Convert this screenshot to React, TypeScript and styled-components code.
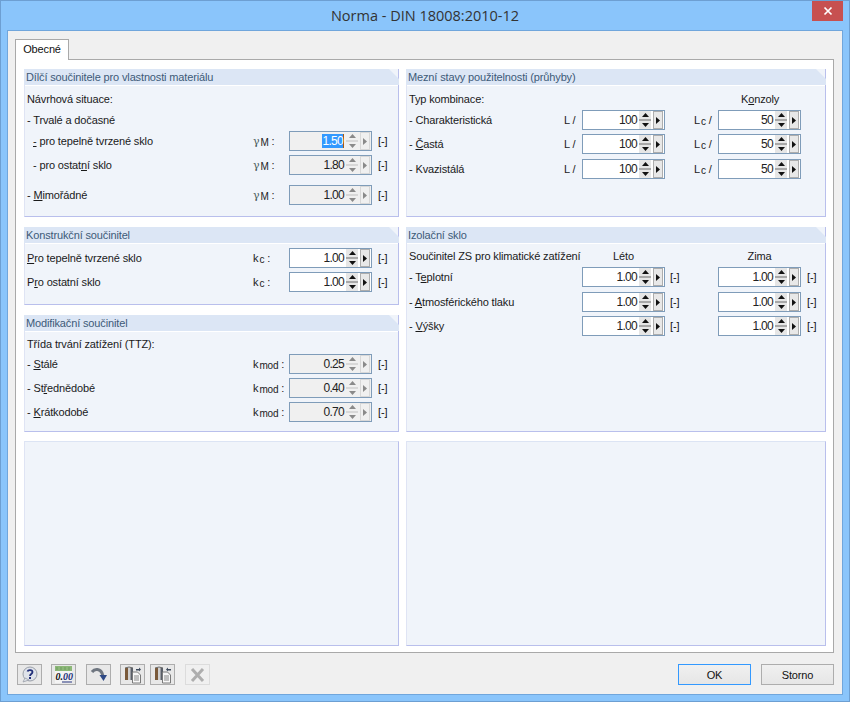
import React from "react";
import styled, { createGlobalStyle } from "styled-components";

const Global = createGlobalStyle`
  html, body { margin: 0; padding: 0; width: 850px; height: 702px; overflow: hidden; }
  body { font-family: "Liberation Sans", Arial, sans-serif; font-size: 11px; letter-spacing: -0.14px; color: #1a1a1a; }
  * { box-sizing: border-box; }
  u { text-underline-offset: 1px; text-decoration-thickness: 1px; }
`;

const Win = styled.div`
  width: 850px; height: 702px; background: #8ac5fb; border: 1px solid #6d9fd2;
  display: flex; flex-direction: column; position: relative;
`;
const TitleBar = styled.div`
  height: 29px; flex: none; display: flex; align-items: center; justify-content: center; letter-spacing: 0;
  font-family: "Open Sans", sans-serif; font-size: 14.5px; color: #333; padding-bottom: 1px;
`;
const Close = styled.div`
  position: absolute; top: 0; right: 6px; width: 31px; height: 20px; background: #c75050;
  display: flex; align-items: center; justify-content: center;
`;
const Client = styled.div`
  flex: 1; margin: 0 6px 6px 6px; background: #f0f0f0; border: 1px solid #70a6dc;
  padding: 8px 8px 0 7px; display: flex; flex-direction: column;
`;
const TabRow = styled.div`display: flex; height: 20px; flex: none;`;
const Tab = styled.div`
  width: 54px; height: 21px; background: #fff; border: 1px solid #a9a9a9; border-bottom: 0;
  position: relative; z-index: 1; text-align: center; line-height: 19px; color: #111;
`;
const TabPage = styled.div`
  height: 594px; flex: none; background: #fff; border: 1px solid #a9a9a9; padding: 9px 6px 0 8px;
  display: grid; grid-template-columns: 375px 420px; column-gap: 7px; align-content: start;
`;
const Column = styled.div`display: flex; flex-direction: column;`;
const Panel = styled.div<{ $h: number; $mb?: number }>`
  height: ${p => p.$h}px; margin-bottom: ${p => p.$mb ?? 0}px; background: #f0f4fa; flex: none;
  border: 1px solid #b9bfec; border-width: 0 1px 1px 1px; border-left-color: #dfe4f4;
  position: relative; display: flex; flex-direction: column;
`;
const Empty = styled.div`
  height: 205px; background: #f0f4fa; border: 1px solid #b9bfec; border-top-color: #dce4f4; border-left-color: #dfe4f4;
`;
const Head = styled.div`
  height: 16px; margin: 0 -1px; background: #dce6f5; color: #3c5a78; padding-left: 2px; line-height: 16px; flex: none;
  clip-path: polygon(0 0, calc(100% - 10px) 0, 100% 10px, 100% 100%, 0 100%);
  border-bottom: 0; white-space: nowrap;
`;
const Body = styled.div<{ $pt: number }>`
  padding: ${p => p.$pt}px 0 0 2px; border-top: 1px solid #fff; flex: 1;
`;
const LeftRow = styled.div<{ $mt?: number }>`
  display: grid; grid-template-columns: 226px 36px 83px auto; height: 20px; align-items: center;
  margin-top: ${p => p.$mt ?? 0}px; white-space: nowrap;
`;
const ServRow = styled.div<{ $mt?: number }>`
  display: grid; grid-template-columns: 155px 18px 83px 29px 24px 83px; height: 20px; align-items: center;
  margin-top: ${p => p.$mt ?? 0}px; white-space: nowrap;
`;
const InsRow = styled.div<{ $mt?: number }>`
  display: grid; grid-template-columns: 173px 83px 53px 83px auto; height: 20px; align-items: center;
  margin-top: ${p => p.$mt ?? 0}px; white-space: nowrap;
`;
const Label = styled.div<{ $indent?: number; $span?: number }>`
  padding-left: ${p => p.$indent ?? 0}px;
  ${p => p.$span ? `grid-column: span ${p.$span};` : ""}
`;
const Centered = styled.div`text-align: center;`;
const Konzoly = styled.div`grid-column: 6; padding-left: 23px;`;
const Sym = styled.div`color: #222; white-space: nowrap;`;
const Greek = styled.span`font-family: "DejaVu Serif", serif; font-size: 11px; color: #4a5a5a;`;
const Sub = styled.span`font-size: 10px; position: relative; top: 1px; margin-left: 1px;`;
const Unit = styled.div<{ $pl?: number }>`padding-left: ${p => p.$pl ?? 6}px; color: #111;`;

const SpinBox = styled.div<{ $off?: boolean }>`
  width: 83px; height: 20px; border: 1px solid #7f9cb9; background: ${p => p.$off ? "#f0f0f0" : "#fff"};
  display: flex; align-items: stretch; padding: 0 1px 0 0; color: #222;
`;
const Value = styled.div`flex: 1; text-align: right; padding-right: 2px; line-height: 18px; font-size: 12px; letter-spacing: -0.7px;`;
const Sel = styled.span`
  background: #3399ff; color: #fff; display: inline-block; height: 14px; line-height: 14px; border-right: 1px solid #a85a10; margin-top: 2px; vertical-align: top;
`;
const Arrows = styled.div`width: 12px; display: flex; flex-direction: column; margin-right: 2px;`;
const ArrowBtn = styled.div<{ $off?: boolean; $bottom?: boolean }>`
  flex: 1; display: flex; align-items: center; justify-content: center; background: ${p => p.$off ? "#f0f0f0" : "#e6e6e6"};
  border-bottom: ${p => p.$bottom ? "0" : `2px solid ${p.$off ? "#d8d8d8" : "#a8a8a8"}`};
`;
const NextBtn = styled.div<{ $off?: boolean }>`
  width: 10px; margin: 0; display: flex; align-items: center; justify-content: center;
  background: ${p => p.$off ? "#f0f0f0" : "#e8e8e8"}; border: 1px solid ${p => p.$off ? "#d8d8d8" : "#adadad"};
`;
const Tri = styled.svg`display: block;`;

const Spinner = ({ v, off, sel }: { v: string; off?: boolean; sel?: boolean }) => {
  const c = off ? "#8a8a8a" : "#111";
  return (
    <SpinBox $off={off}>
      <Value>{sel ? <Sel>{v}</Sel> : v}</Value>
      <Arrows>
        <ArrowBtn $off={off}><Tri width="7" height="4"><path d="M3.5 0L7 4H0z" fill={c} /></Tri></ArrowBtn>
        <ArrowBtn $off={off} $bottom><Tri width="7" height="4"><path d="M0 0H7L3.5 4z" fill={c} /></Tri></ArrowBtn>
      </Arrows>
      <NextBtn $off={off}><Tri width="4" height="7"><path d="M0 0L4 3.5L0 7z" fill={c} /></Tri></NextBtn>
    </SpinBox>
  );
};

const GammaM = () => <Sym><Greek>γ</Greek><Sub>M</Sub> :</Sym>;
const Kc = () => <Sym>k<Sub>c</Sub> :</Sym>;
const Kmod = () => <Sym>k<Sub>mod</Sub> :</Sym>;
const L = () => <Sym>L /</Sym>;
const Lc = () => <Sym>L<Sub>c</Sub> /</Sym>;

const Footer = styled.div`flex: 1; display: flex; align-items: flex-start; padding: 11px 0 0 2px;`;
const Tool = styled.div<{ $ml: number; $off?: boolean }>`
  width: 25px; height: 21px; margin-left: ${p => p.$ml}px; border: 1px solid ${p => p.$off ? "#dcdcdc" : "#adadad"};
  background: ${p => p.$off ? "#f0f0f0" : "#e8e8e8"}; display: flex; align-items: center; justify-content: center;
`;
const Spacer = styled.div`flex: 1;`;
const Btn = styled.div<{ $primary?: boolean; $ml?: number }>`
  width: 73px; height: 21px; margin-left: ${p => p.$ml ?? 0}px; text-align: center; line-height: 20px; color: #111;
  background: linear-gradient(#f0f0f0, #e6e6e6); border: 1px solid ${p => p.$primary ? "#3399ff" : "#adadad"};
`;
const Num = styled.text`font-family: "Liberation Serif", serif; font-size: 10px; font-style: italic; font-weight: bold; letter-spacing: 0;`;

const Help = () => (
  <svg width="19" height="17" viewBox="0 0 19 17">
    <ellipse cx="10" cy="8" rx="7" ry="7" fill="#dfe3ea" stroke="#9a9fa8" />
    <path d="M5 12L3 16L9 14z" fill="#dfe3ea" stroke="#9a9fa8" strokeWidth=".8" />
    <path d="M7.500 5.500C8 3.500 12.500 3.500 12.500 6C12.500 8 10 8 10 10" fill="none" stroke="#23307a" strokeWidth="1.8" />
    <rect x="9" y="11" width="2" height="2" fill="#23307a" />
  </svg>
);
const Calc = () => (
  <svg width="23" height="18" viewBox="0 0 23 18">
    <rect x="3" y="0" width="17" height="5" fill="#8cb878" />
    <path d="M5 1v3M9 1v3M13 1v3M17 1v3" stroke="#6f9a60" />
    <rect x="3" y="5" width="17" height="12" fill="#f4f4f4" />
    <Num x="3.500" y="14" fill="#111">0.</Num>
    <Num x="11" y="14" fill="#23307a">00</Num>
    <path d="M10 16H20" stroke="#23307a" />
  </svg>
);
const Curve = () => (
  <svg width="20" height="17" viewBox="0 0 20 17">
    <path d="M3 6C6 2 11 3 13 7L14 10" fill="none" stroke="#6f7680" strokeWidth="3" />
    <path d="M10.500 9H18L14.500 15z" fill="#2f4a86" />
  </svg>
);
const Doc = ({ back }: { back?: boolean }) => (
  <svg width="21" height="18" viewBox="0 0 21 18">
    <rect x="3" y="2" width="3" height="12" fill="#7a5a3a" />
    <rect x="6" y="2" width="2.500" height="12" fill="#d0d0d0" />
    <rect x="8.500" y="2" width="2.500" height="12" fill="#5a5f68" />
    <path d="M3 2Q7 0 11 2" fill="none" stroke="#666" />
    <path d="M10.500 6H15.500L18.500 9V17H10.500z" fill="#f7f7f7" stroke="#7a7a7a" />
    <path d="M12 10H17M12 12H17M12 14H17" stroke="#888" />
    <path d={back ? "M14 3.500L16 1.500V3H19V4.500H16V5.500z" : "M19 3.500L17 1.500V3H14V4.500H17V5.500z"} fill="#3d4a5c" />
  </svg>
);
const Cross = () => (
  <svg width="17" height="16" viewBox="0 0 17 16">
    <path d="M3 2L14 14M14 2L3 14" stroke="#aeaeae" strokeWidth="3" />
  </svg>
);

export default function App() {
  return (
    <Win>
      <Global />
      <TitleBar>Norma - DIN 18008:2010-12</TitleBar>
      <Close>
        <svg width="10" height="10" viewBox="0 0 10 10"><path d="M1.500 1.500L8.500 8.500M8.500 1.500L1.500 8.500" stroke="#fff" strokeWidth="1.700" /></svg>
      </Close>
      <Client>
        <TabRow><Tab>Obecné</Tab></TabRow>
        <TabPage>
          <Column>
            <Panel $h={148} $mb={10}>
              <Head>Dílčí součinitele pro vlastnosti materiálu</Head>
              <Body $pt={3}>
                <LeftRow><Label>Návrhová situace:</Label></LeftRow>
                <LeftRow $mt={1}><Label>- Trvalé a dočasné</Label></LeftRow>
                <LeftRow $mt={1}><Label $indent={6}><u>-</u> pro tepelně tvrzené sklo</Label><GammaM /><Spinner v="1.50" off sel /><Unit>[-]</Unit></LeftRow>
                <LeftRow $mt={4}><Label $indent={6}>- pro ostat<u>n</u>í sklo</Label><GammaM /><Spinner v="1.80" off /><Unit>[-]</Unit></LeftRow>
                <LeftRow $mt={10}><Label>- <u>M</u>imořádné</Label><GammaM /><Spinner v="1.00" off /><Unit>[-]</Unit></LeftRow>
              </Body>
            </Panel>
            <Panel $h={78} $mb={10}>
              <Head>Konstrukční součinitel</Head>
              <Body $pt={4}>
                <LeftRow><Label><u>P</u>ro tepelně tvrzené sklo</Label><Kc /><Spinner v="1.00" /><Unit>[-]</Unit></LeftRow>
                <LeftRow $mt={4}><Label>P<u>r</u>o ostatní sklo</Label><Kc /><Spinner v="1.00" /><Unit>[-]</Unit></LeftRow>
              </Body>
            </Panel>
            <Panel $h={117} $mb={9}>
              <Head>Modifikační součinitel</Head>
              <Body $pt={2}>
                <LeftRow><Label>Třída trvání zatížení (TTZ):</Label></LeftRow>
                <LeftRow><Label>- <u>S</u>tálé</Label><Kmod /><Spinner v="0.25" off /><Unit>[-]</Unit></LeftRow>
                <LeftRow $mt={4}><Label>- St<u>ř</u>ednědobé</Label><Kmod /><Spinner v="0.40" off /><Unit>[-]</Unit></LeftRow>
                <LeftRow $mt={4}><Label>- <u>K</u>rátkodobé</Label><Kmod /><Spinner v="0.70" off /><Unit>[-]</Unit></LeftRow>
              </Body>
            </Panel>
            <Empty />
          </Column>
          <Column>
            <Panel $h={148} $mb={10}>
              <Head>Mezní stavy použitelnosti (průhyby)</Head>
              <Body $pt={3}>
                <ServRow><Label $span={5}>Typ kombinace:</Label><Konzoly>K<u>o</u>nzoly</Konzoly></ServRow>
                <ServRow $mt={1}><Label>- Charakteristická</Label><L /><Spinner v="100" /><span /><Lc /><Spinner v="50" /></ServRow>
                <ServRow $mt={4}><Label>- <u>Č</u>astá</Label><L /><Spinner v="100" /><span /><Lc /><Spinner v="50" /></ServRow>
                <ServRow $mt={5}><Label>- Kvazistálá</Label><L /><Spinner v="100" /><span /><Lc /><Spinner v="50" /></ServRow>
              </Body>
            </Panel>
            <Panel $h={205} $mb={9}>
              <Head>Izolační sklo</Head>
              <Body $pt={2}>
                <InsRow><Label>Součinitel ZS pro klimatické zatížení</Label><Centered>Léto</Centered><span /><Centered>Zima</Centered></InsRow>
                <InsRow $mt={1}><Label>- T<u>e</u>plotní</Label><Spinner v="1.00" /><Unit $pl={5}>[-]</Unit><Spinner v="1.00" /><Unit>[-]</Unit></InsRow>
                <InsRow $mt={5}><Label>- <u>A</u>tmosférického tlaku</Label><Spinner v="1.00" /><Unit $pl={5}>[-]</Unit><Spinner v="1.00" /><Unit>[-]</Unit></InsRow>
                <InsRow $mt={4}><Label>- <u>V</u>ýšky</Label><Spinner v="1.00" /><Unit $pl={5}>[-]</Unit><Spinner v="1.00" /><Unit>[-]</Unit></InsRow>
              </Body>
            </Panel>
            <Empty />
          </Column>
        </TabPage>
        <Footer>
          <Tool $ml={0}><Help /></Tool>
          <Tool $ml={9}><Calc /></Tool>
          <Tool $ml={10}><Curve /></Tool>
          <Tool $ml={9}><Doc /></Tool>
          <Tool $ml={5}><Doc back /></Tool>
          <Tool $ml={10} $off><Cross /></Tool>
          <Spacer />
          <Btn $primary>OK</Btn>
          <Btn $ml={10}>Storno</Btn>
        </Footer>
      </Client>
    </Win>
  );
}
